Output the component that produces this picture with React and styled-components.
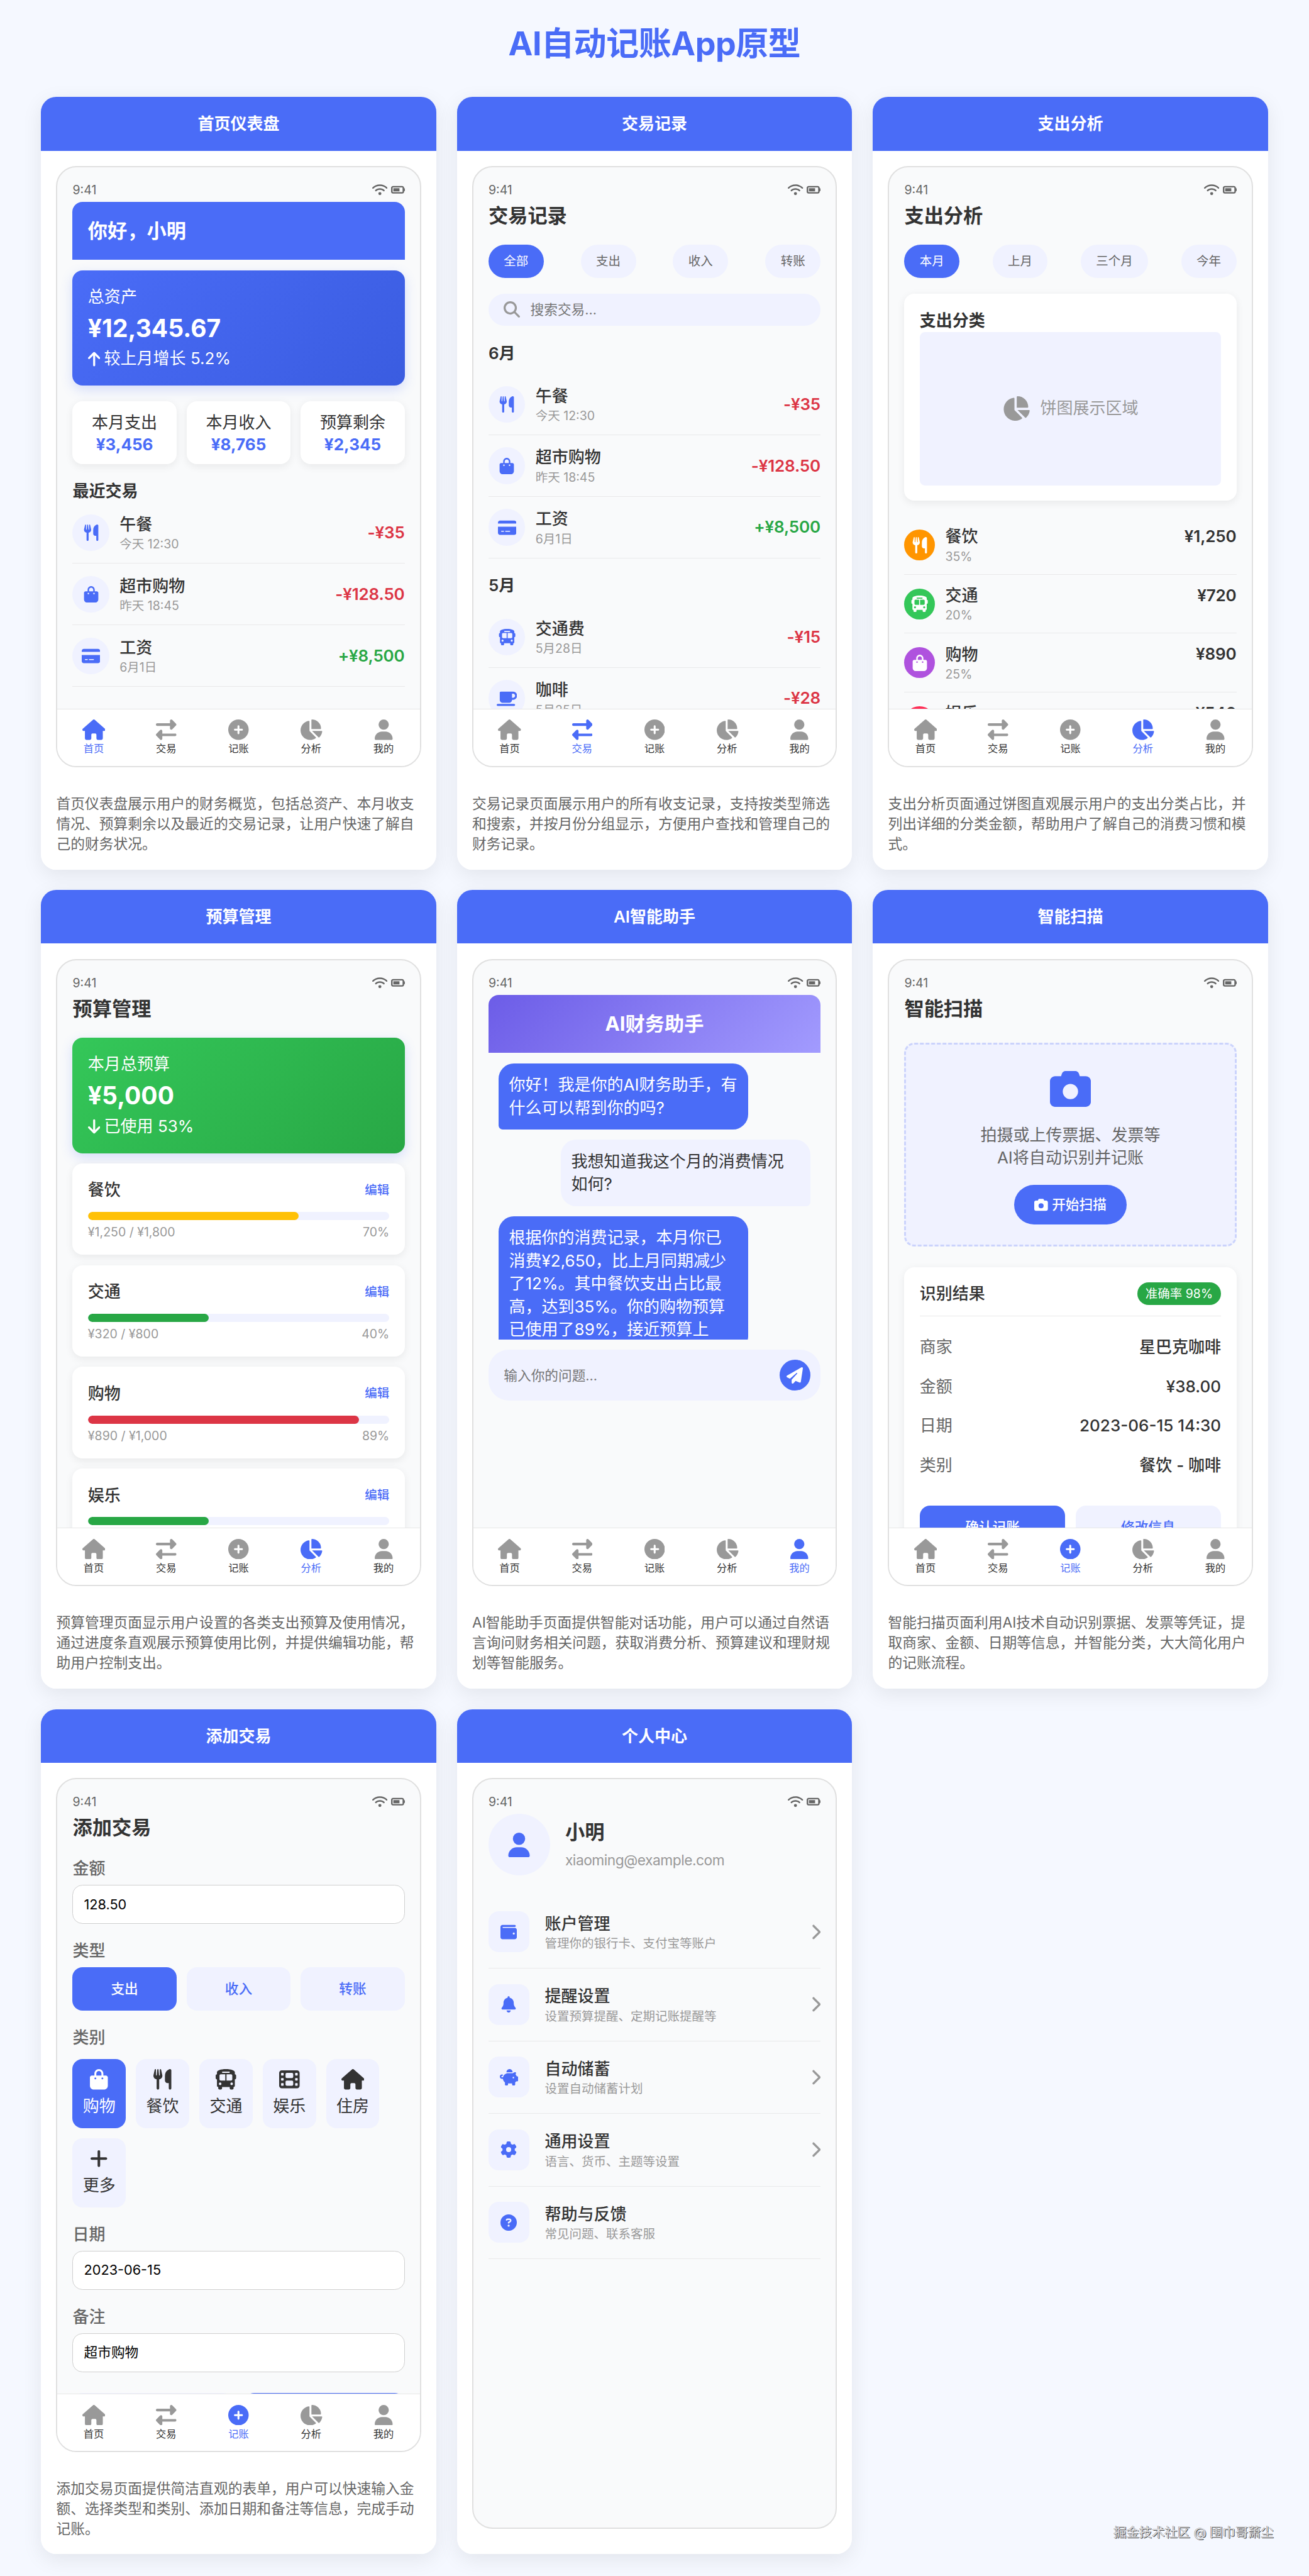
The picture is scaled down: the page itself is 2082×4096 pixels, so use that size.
import React from "react";
import styled, { createGlobalStyle, css } from "styled-components";
import * as Fa from "react-icons/fa6";

const {
  FaUtensils, FaBagShopping, FaRightLeft, FaCirclePlus, FaUser, FaMagnifyingGlass, FaFilm,
  FaPaperPlane, FaCamera, FaPlus, FaWallet, FaBell, FaGear, FaCircleQuestion,
} = Fa;

/* glyphs whose drawing is wider or narrower than one em */
const sized = (Icon, em) => styled(Icon)`
  width: ${em}em;
`;
const FaWifi = sized(Fa.FaWifi, 1.25);
const FaBattery = sized(Fa.FaBatteryThreeQuarters, 1.125);
const FaArrowUp = sized(Fa.FaArrowUp, 0.75);
const FaArrowDown = sized(Fa.FaArrowDown, 0.75);
const FaCreditCard = sized(Fa.FaCreditCard, 1.125);
const FaHouse = sized(Fa.FaHouse, 1.125);
const FaChartPie = sized(Fa.FaChartPie, 1.125);
const FaBus = sized(Fa.FaBus, 1.125);
const FaMugSaucer = sized(Fa.FaMugSaucer, 1.25);
const FaPiggyBank = sized(Fa.FaPiggyBank, 1.125);
const FaChevronRight = sized(Fa.FaChevronRight, 0.625);

/* 1rem is ten design pixels */
const GlobalStyle = createGlobalStyle`
  html { font-size: 16.265625px; }
  *, *::before, *::after { box-sizing: border-box; }
  body {
    margin: 0;
    background: #f5f8ff;
    color: #333;
    font-family: Inter, "Noto Sans CJK SC", sans-serif;
    font-size: 1.6rem;
    line-height: 1.4;
  }
  svg { display: block; flex: none; }
`;

const blue = "#4a6cf7";
const tint = "#f0f2ff";

const Page = styled.main`
  position: relative;
  height: 251.8rem;
  padding: 2.05rem 4rem 0;
`;
const PageTitle = styled.h1`
  margin: 0 0 2.96rem;
  height: 4.48rem;
  line-height: 4.6rem;
  font-size: 3.2rem;
  font-weight: 700;
  letter-spacing: -0.03rem;
  text-align: center;
  color: ${blue};
`;
const Grid = styled.div`
  display: grid;
  grid-template-columns: repeat(3, 1fr);
  gap: 2rem;
`;
const Card = styled.section`
  display: flex;
  flex-direction: column;
  height: ${(p) => p.$h}rem;
  border-radius: 1.5rem;
  overflow: hidden;
  background: #fff;
`;
const CardShadow = styled.div`
  border-radius: 1.5rem;
  box-shadow: 0 0.5rem 2rem rgba(0, 0, 0, 0.08);
`;
const CardHeader = styled.header`
  height: 5.24rem;
  padding: 1.54rem 1.5rem 0;
  background: ${blue};
  color: #fff;
  font-weight: 600;
  text-align: center;
`;
const CardBody = styled.div`
  padding: 1.5rem;
`;
const Caption = styled.p`
  margin: 2.6rem 0 0;
  font-size: 1.4rem;
  color: #666;
  white-space: nowrap;
`;

const Phone = styled.div`
  display: flex;
  flex-direction: column;
  height: ${(p) => p.$h}rem;
  border: 2px solid #e0e0e0;
  border-radius: 2rem;
  overflow: hidden;
  background: #f9fafb;
`;
const Screen = styled.div`
  flex: 1;
  min-height: 0;
  overflow: hidden;
  padding: calc(1.6rem - 2px) calc(1.6rem - 2px) 0;
`;
const StatusBar = styled.div`
  display: flex;
  justify-content: space-between;
  height: 1.91rem;
  font-size: 1.2rem;
  line-height: 1.5rem;
  color: #666;
`;
const StatusIcons = styled.div`
  display: flex;
  align-items: center;
  gap: 0.33rem;
  height: 1.44rem;
`;
const Nav = styled.nav`
  display: flex;
  height: calc(5.7rem - 2px);
  padding-top: 1rem;
  border-top: 1px solid #e6e6e6;
  background: #fff;
`;
const NavItem = styled.div`
  flex: 1;
  display: flex;
  flex-direction: column;
  align-items: center;
  gap: 0.16rem;
  font-size: 1rem;
  color: ${(p) => (p.$active ? blue : "#333")};
  svg { font-size: 2rem; color: ${(p) => (p.$active ? blue : "#999")}; }
`;

const ScreenTitle = styled.h2`
  margin: 0 0 1.5rem;
  height: 2.69rem;
  line-height: 2.75rem;
  font-size: 1.92rem;
  font-weight: 700;
`;
const Banner = styled.div`
  height: 5.68rem;
  padding: 1.5rem;
  border-radius: 1rem 1rem 0 0;
  background: ${(p) => (p.$ai ? "linear-gradient(135deg, #6c5ce7, #a29bfe)" : blue)};
  color: #fff;
  font-size: 1.92rem;
  line-height: 2.75rem;
  font-weight: 700;
  text-align: ${(p) => (p.$ai ? "center" : "left")};
`;
const TotalCard = styled.div`
  height: 11.28rem;
  margin-top: ${(p) => p.$mt || 0}rem;
  padding: 1.5rem;
  border-radius: 1rem;
  color: #fff;
  background: ${(p) =>
    p.$green ? "linear-gradient(135deg, #34c759, #28a745)" : "linear-gradient(135deg, #4a6cf7, #3a5ce0)"};
  box-shadow: 0 0.4rem 1.2rem rgba(74, 108, 247, 0.2);
`;
const Amount = styled.div`
  height: 3.8rem;
  line-height: 3.8rem;
  font-size: 2.4rem;
  font-weight: 700;
`;
const Trend = styled.div`
  display: flex;
  align-items: center;
  gap: 0.38rem;
`;
const Stats = styled.div`
  display: flex;
  gap: 1rem;
  margin-top: 1.5rem;
`;
const panel = css`
  background: #fff;
  border-radius: 1rem;
  box-shadow: 0 0.2rem 0.8rem rgba(0, 0, 0, 0.07);
`;
const Stat = styled.div`
  ${panel}
  flex: 1;
  height: 6.16rem;
  padding-top: 1.04rem;
  text-align: center;
  line-height: 2.24rem;
`;
const StatValue = styled.div`
  margin-top: -0.14rem;
  font-weight: 700;
  color: ${blue};
`;
const SectionTitle = styled.h3`
  margin: ${(p) => p.$m || "0"};
  height: 2.24rem;
  line-height: 2.28rem;
  font-size: 1.6rem;
  font-weight: 600;
`;

const Row = styled.div`
  display: flex;
  align-items: center;
  gap: ${(p) => p.$gap || 1}rem;
  height: ${(p) => p.$h || 6.02}rem;
  border-bottom: 1px solid #e9e9ea;
`;
const RoundIcon = styled.div`
  display: grid;
  place-items: center;
  flex: none;
  width: ${(p) => p.$s || 3.6}rem;
  height: ${(p) => p.$s || 3.6}rem;
  border-radius: ${(p) => p.$r || "50%"};
  background: ${(p) => p.$bg || tint};
  color: ${(p) => (p.$bg ? "#fff" : blue)};
  font-size: ${(p) => p.$fs || 1.6}rem;
`;
const RowText = styled.div`
  flex: 1;
  padding-top: 0.08rem;
`;
const Name = styled.div`
  font-weight: 500;
`;
const Small = styled.div`
  font-size: 1.2rem;
  color: #999;
`;
const Money = styled.div`
  font-weight: 600;
  letter-spacing: -0.01rem;
  color: ${(p) => p.$c || "#333"};
  align-self: ${(p) => (p.$top ? "flex-start" : "center")};
  padding-top: ${(p) => (p.$top ? "0.9rem" : "0")};
`;

const Tabs = styled.div`
  display: flex;
  justify-content: space-between;
  margin-bottom: 1.5rem;
`;
const Tab = styled.div`
  padding: 0.8rem 1.5rem;
  border-radius: 2rem;
  font-size: 1.2rem;
  background: ${(p) => (p.$active ? blue : tint)};
  color: ${(p) => (p.$active ? "#fff" : "#666")};
`;
const Search = styled.div`
  display: flex;
  align-items: center;
  gap: 1rem;
  height: 3.15rem;
  padding: 0 1.5rem;
  border-radius: 2rem;
  background: ${tint};
  font-size: 1.333rem;
  color: #757575;
  svg { font-size: 1.6rem; color: #999; }
`;

const ChartPanel = styled.div`
  ${panel}
  padding: 1.5rem;
  margin-bottom: 1.5rem;
`;
const ChartArea = styled.div`
  display: flex;
  align-items: center;
  justify-content: center;
  gap: 1rem;
  height: 15rem;
  border-radius: 0.5rem;
  background: ${tint};
  color: #999;
  svg { font-size: 2.4rem; }
`;

const Budget = styled.div`
  ${panel}
  height: 8.95rem;
  margin-top: 1rem;
  padding: 1.5rem;
`;
const Between = styled.div`
  display: flex;
  justify-content: space-between;
  align-items: center;
`;
const Edit = styled.span`
  font-size: 1.2rem;
  font-weight: 500;
  color: ${blue};
`;
const Track = styled.div`
  height: 0.8rem;
  margin: 1rem 0 0.4rem;
  border-radius: 0.4rem;
  background: ${tint};
  overflow: hidden;
`;
const Fill = styled.div`
  height: 100%;
  border-radius: 0.4rem;
  background: ${(p) => p.$c};
`;

const Chat = styled.div`
  display: flex;
  flex-direction: column;
  gap: 1rem;
  height: 28rem;
  padding: 1rem;
  overflow: hidden;
`;
const Bubble = styled.div`
  flex: none;
  width: 80%;
  padding: 1.02rem 1rem 0.98rem;
  white-space: nowrap;
  align-self: ${(p) => (p.$me ? "flex-end" : "flex-start")};
  border-radius: ${(p) => (p.$me ? "1.5rem 1.5rem 0.4rem 1.5rem" : "1.5rem 1.5rem 1.5rem 0.4rem")};
  background: ${(p) => (p.$me ? tint : blue)};
  color: ${(p) => (p.$me ? "#333" : "#fff")};
`;
const Composer = styled.div`
  display: flex;
  align-items: center;
  justify-content: space-between;
  height: 5rem;
  margin-top: 1rem;
  padding: 0 1rem 0 1.5rem;
  border-radius: 2rem;
  background: ${tint};
  font-size: 1.333rem;
  color: #757575;
`;

const ScanBox = styled.div`
  display: flex;
  flex-direction: column;
  align-items: center;
  height: 19.95rem;
  margin-top: 1.96rem;
  padding-top: 2.35rem;
  border: 3px dashed #cbd3fc;
  border-radius: 1rem;
  background: ${tint};
  color: #666;
  text-align: center;
  > svg { font-size: 4rem; color: ${blue}; margin-bottom: 1.42rem; }
`;
const ScanButton = styled.div`
  display: flex;
  align-items: center;
  justify-content: center;
  gap: 0.4rem;
  width: 11.06rem;
  height: 3.87rem;
  margin-top: 1.48rem;
  border-radius: 2rem;
  background: ${blue};
  color: #fff;
  font-size: 1.333rem;
  font-weight: 500;
`;
const Result = styled.div`
  ${panel}
  margin-top: 2rem;
  padding: 1.5rem;
`;
const ResultHead = styled(Between)`
  padding-bottom: 1.04rem;
  margin-bottom: 1.08rem;
  border-bottom: 1px solid #e9e9e9;
`;
const Badge = styled.span`
  width: 8.2rem;
  height: 2.24rem;
  line-height: 2.24rem;
  border-radius: 1.12rem;
  background: #28a745;
  color: #fff;
  font-size: 1.2rem;
  text-align: center;
`;
const Field = styled(Between)`
  height: 3.85rem;
  color: #666;
`;
const FieldValue = styled.span`
  font-weight: 500;
  color: #333;
`;
const Buttons = styled.div`
  display: flex;
  gap: 1rem;
  margin-top: ${(p) => p.$mt || 0}rem;
`;
const Button = styled.div`
  flex: 1;
  height: 4.24rem;
  line-height: 4.24rem;
  border-radius: 1rem;
  text-align: center;
  font-size: 1.333rem;
  font-weight: 500;
  background: ${(p) => (p.$primary ? blue : tint)};
  color: ${(p) => (p.$primary ? "#fff" : blue)};
`;

const Label = styled.div`
  height: 2.24rem;
  line-height: 2.3rem;
  margin: 1.5rem 0 ${(p) => p.$mb || 0.5}rem;
  font-weight: 500;
  color: #666;
`;
const Input = styled.div`
  display: flex;
  align-items: center;
  height: 3.82rem;
  padding: 0 1.05rem;
  border: 1px solid #cfcfcf;
  border-radius: 1rem;
  background: #fff;
  color: #000;
  font-size: 1.333rem;
`;
const Categories = styled.div`
  display: flex;
  flex-wrap: wrap;
  gap: 1rem;
`;
const Category = styled.div`
  display: flex;
  flex-direction: column;
  align-items: center;
  gap: 0.5rem;
  width: 5.2rem;
  padding: 1rem 0;
  border-radius: 1rem;
  background: ${(p) => (p.$active ? blue : tint)};
  color: ${(p) => (p.$active ? "#fff" : "#333")};
  svg { font-size: 2rem; }
`;

const Profile = styled.div`
  display: flex;
  align-items: center;
  gap: 1.5rem;
  height: 6rem;
  margin-bottom: 2rem;
`;
const ProfileName = styled.div`
  font-size: 1.92rem;
  font-weight: 700;
`;
const Email = styled.div`
  margin-top: 0.4rem;
  font-size: 1.4rem;
  letter-spacing: -0.03rem;
  color: #999;
`;
const Chevron = styled(FaChevronRight)`
  color: #999;
  font-size: 1.6rem;
`;
const Watermark = styled.div`
  position: absolute;
  right: 3.45rem;
  top: 246.65rem;
  line-height: 1.8rem;
  font-size: 1.25rem;
  color: #e4e4e6;
  text-shadow: 1px 1px 0 #444, -0.5px -0.5px 0 #777;
`;

const NAV = [
  ["首页", FaHouse],
  ["交易", FaRightLeft],
  ["记账", FaCirclePlus],
  ["分析", FaChartPie],
  ["我的", FaUser],
];

function Mockup({ title, cardHeight, phoneHeight, active, caption, children }) {
  return (
    <CardShadow>
      <Card $h={cardHeight}>
        <CardHeader>{title}</CardHeader>
        <CardBody>
          <Phone $h={phoneHeight}>
            <Screen>
              <StatusBar>
                <span>9:41</span>
                <StatusIcons>
                  <FaWifi />
                  <FaBattery />
                </StatusIcons>
              </StatusBar>
              {children}
            </Screen>
            {active !== undefined && (
              <Nav>
                {NAV.map(([label, Icon], i) => (
                  <NavItem key={label} $active={i === active}>
                    <Icon />
                    {label}
                  </NavItem>
                ))}
              </Nav>
            )}
          </Phone>
          {caption && (
            <Caption>
              {caption.map((line) => (
                <React.Fragment key={line}>
                  {line}
                  <br />
                </React.Fragment>
              ))}
            </Caption>
          )}
        </CardBody>
      </Card>
    </CardShadow>
  );
}

function Transaction({ icon: Icon, name, time, amount }) {
  return (
    <Row>
      <RoundIcon><Icon /></RoundIcon>
      <RowText>
        <Name>{name}</Name>
        <Small>{time}</Small>
      </RowText>
      <Money $c={amount[0] === "+" ? "#28a745" : "#dc3545"}>{amount}</Money>
    </Row>
  );
}

const JUNE = [
  { icon: FaUtensils, name: "午餐", time: "今天 12:30", amount: "-¥35" },
  { icon: FaBagShopping, name: "超市购物", time: "昨天 18:45", amount: "-¥128.50" },
  { icon: FaCreditCard, name: "工资", time: "6月1日", amount: "+¥8,500" },
];
const MAY = [
  { icon: FaBus, name: "交通费", time: "5月28日", amount: "-¥15" },
  { icon: FaMugSaucer, name: "咖啡", time: "5月25日", amount: "-¥28" },
];
const SPENDING = [
  [FaUtensils, "#ff9500", "餐饮", "35%", "¥1,250"],
  [FaBus, "#34c759", "交通", "20%", "¥720"],
  [FaBagShopping, "#af52de", "购物", "25%", "¥890"],
  [FaFilm, "#ff2d55", "娱乐", "15%", "¥540"],
];
const BUDGETS = [
  ["餐饮", "¥1,250 / ¥1,800", "70%", 70, "#ffc107"],
  ["交通", "¥320 / ¥800", "40%", 40, "#28a745"],
  ["购物", "¥890 / ¥1,000", "89%", 90, "#dc3545"],
  ["娱乐", null, null, 40, "#28a745"],
];
const CATEGORIES = [
  [FaBagShopping, "购物"],
  [FaUtensils, "餐饮"],
  [FaBus, "交通"],
  [FaFilm, "娱乐"],
  [FaHouse, "住房"],
  [FaPlus, "更多"],
];
const MENU = [
  [FaWallet, "账户管理", "管理你的银行卡、支付宝等账户", true],
  [FaBell, "提醒设置", "设置预算提醒、定期记账提醒等", true],
  [FaPiggyBank, "自动储蓄", "设置自动储蓄计划", true],
  [FaGear, "通用设置", "语言、货币、主题等设置", true],
  [FaCircleQuestion, "帮助与反馈", "常见问题、联系客服", false],
];

export default function App() {
  return (
    <Page>
      <GlobalStyle />
      <PageTitle>AI自动记账App原型</PageTitle>
      <Grid>
        <Mockup
          title="首页仪表盘" cardHeight={75.52} phoneHeight={58.76} active={0}
          caption={["首页仪表盘展示用户的财务概览，包括总资产、本月收支", "情况、预算剩余以及最近的交易记录，让用户快速了解自", "己的财务状况。"]}
        >
          <Banner>你好，小明</Banner>
          <TotalCard $mt={1}>
            <div>总资产</div>
            <Amount>¥12,345.67</Amount>
            <Trend><FaArrowUp />较上月增长 5.2%</Trend>
          </TotalCard>
          <Stats>
            <Stat>本月支出<StatValue>¥3,456</StatValue></Stat>
            <Stat>本月收入<StatValue>¥8,765</StatValue></Stat>
            <Stat>预算剩余<StatValue>¥2,345</StatValue></Stat>
          </Stats>
          <SectionTitle $m="1.5rem 0 0">最近交易</SectionTitle>
          {JUNE.map((t) => <Transaction key={t.name} {...t} />)}
        </Mockup>

        <Mockup
          title="交易记录" cardHeight={75.52} phoneHeight={58.76} active={1}
          caption={["交易记录页面展示用户的所有收支记录，支持按类型筛选", "和搜索，并按月份分组显示，方便用户查找和管理自己的", "财务记录。"]}
        >
          <ScreenTitle>交易记录</ScreenTitle>
          <Tabs>
            <Tab $active>全部</Tab><Tab>支出</Tab><Tab>收入</Tab><Tab>转账</Tab>
          </Tabs>
          <Search><FaMagnifyingGlass />搜索交易...</Search>
          <SectionTitle $m="1.5rem 0 0.95rem">6月</SectionTitle>
          {JUNE.map((t) => <Transaction key={t.name} {...t} />)}
          <SectionTitle $m="1.5rem 0 0.95rem">5月</SectionTitle>
          {MAY.map((t) => <Transaction key={t.name} {...t} />)}
        </Mockup>

        <Mockup
          title="支出分析" cardHeight={75.52} phoneHeight={58.76} active={3}
          caption={["支出分析页面通过饼图直观展示用户的支出分类占比，并", "列出详细的分类金额，帮助用户了解自己的消费习惯和模", "式。"]}
        >
          <ScreenTitle>支出分析</ScreenTitle>
          <Tabs>
            <Tab $active>本月</Tab><Tab>上月</Tab><Tab>三个月</Tab><Tab>今年</Tab>
          </Tabs>
          <ChartPanel>
            <SectionTitle>支出分类</SectionTitle>
            <ChartArea><FaChartPie />饼图展示区域</ChartArea>
          </ChartPanel>
          {SPENDING.map(([Icon, color, name, share, amount]) => (
            <Row key={name} $h={5.75}>
              <RoundIcon $s={3} $bg={color}><Icon /></RoundIcon>
              <RowText>
                <Name>{name}</Name>
                <Small>{share}</Small>
              </RowText>
              <Money $top>{amount}</Money>
            </Row>
          ))}
        </Mockup>

        <Mockup
          title="预算管理" cardHeight={78.08} phoneHeight={61.3} active={3}
          caption={["预算管理页面显示用户设置的各类支出预算及使用情况，", "通过进度条直观展示预算使用比例，并提供编辑功能，帮", "助用户控制支出。"]}
        >
          <ScreenTitle>预算管理</ScreenTitle>
          <TotalCard $green>
            <div>本月总预算</div>
            <Amount>¥5,000</Amount>
            <Trend><FaArrowDown />已使用 53%</Trend>
          </TotalCard>
          {BUDGETS.map(([name, used, share, width, color]) => (
            <Budget key={name}>
              <Between><Name>{name}</Name><Edit>编辑</Edit></Between>
              <Track><Fill $c={color} style={{ width: `${width}%` }} /></Track>
              {used && <Between><Small>{used}</Small><Small>{share}</Small></Between>}
            </Budget>
          ))}
        </Mockup>

        <Mockup
          title="AI智能助手" cardHeight={78.08} phoneHeight={61.3} active={4}
          caption={["AI智能助手页面提供智能对话功能，用户可以通过自然语", "言询问财务相关问题，获取消费分析、预算建议和理财规", "划等智能服务。"]}
        >
          <Banner $ai>AI财务助手</Banner>
          <Chat>
            <Bubble>你好！我是你的AI财务助手，有<br />什么可以帮到你的吗?</Bubble>
            <Bubble $me>我想知道我这个月的消费情况<br />如何?</Bubble>
            <Bubble>
              根据你的消费记录，本月你已<br />消费¥2,650，比上月同期减少<br />了12%。其中餐饮支出占比最<br />
              高，达到35%。你的购物预算<br />已使用了89%，接近预算上
            </Bubble>
          </Chat>
          <Composer>
            输入你的问题...
            <RoundIcon $s={3} $bg={blue}><FaPaperPlane /></RoundIcon>
          </Composer>
        </Mockup>

        <Mockup
          title="智能扫描" cardHeight={78.08} phoneHeight={61.3} active={2}
          caption={["智能扫描页面利用AI技术自动识别票据、发票等凭证，提", "取商家、金额、日期等信息，并智能分类，大大简化用户", "的记账流程。"]}
        >
          <ScreenTitle>智能扫描</ScreenTitle>
          <ScanBox>
            <FaCamera />
            <div>拍摄或上传票据、发票等<br />AI将自动识别并记账</div>
            <ScanButton><FaCamera />开始扫描</ScanButton>
          </ScanBox>
          <Result>
            <ResultHead><Name>识别结果</Name><Badge>准确率 98%</Badge></ResultHead>
            <Field>商家<FieldValue>星巴克咖啡</FieldValue></Field>
            <Field>金额<FieldValue>¥38.00</FieldValue></Field>
            <Field>日期<FieldValue>2023-06-15 14:30</FieldValue></Field>
            <Field>类别<FieldValue>餐饮 - 咖啡</FieldValue></Field>
            <Buttons $mt={2}>
              <Button $primary>确认记账</Button>
              <Button>修改信息</Button>
            </Buttons>
          </Result>
        </Mockup>

        <Mockup
          title="添加交易" cardHeight={82.6} phoneHeight={65.9} active={2}
          caption={["添加交易页面提供简洁直观的表单，用户可以快速输入金", "额、选择类型和类别、添加日期和备注等信息，完成手动", "记账。"]}
        >
          <ScreenTitle>添加交易</ScreenTitle>
          <Label>金额</Label>
          <Input>128.50</Input>
          <Label>类型</Label>
          <Buttons>
            <Button $primary>支出</Button><Button>收入</Button><Button>转账</Button>
          </Buttons>
          <Label $mb={1}>类别</Label>
          <Categories>
            {CATEGORIES.map(([Icon, name], i) => (
              <Category key={name} $active={i === 0}><Icon />{name}</Category>
            ))}
          </Categories>
          <Label>日期</Label>
          <Input>2023-06-15</Input>
          <Label>备注</Label>
          <Input>超市购物</Input>
          <Buttons $mt={2.04}>
            <Button />
            <Button $primary />
          </Buttons>
        </Mockup>

        <Mockup title="个人中心" cardHeight={82.6} phoneHeight={73.39}>
          <Profile>
            <RoundIcon $s={6} $fs={2.4}><FaUser /></RoundIcon>
            <div>
              <ProfileName>小明</ProfileName>
              <Email>xiaoming@example.com</Email>
            </div>
          </Profile>
          {MENU.map(([Icon, name, hint, arrow]) => (
            <Row key={name} $h={7.1} $gap={1.5}>
              <RoundIcon $s={4} $r="1rem"><Icon /></RoundIcon>
              <RowText>
                <Name>{name}</Name>
                <Small>{hint}</Small>
              </RowText>
              {arrow && <Chevron />}
            </Row>
          ))}
        </Mockup>
      </Grid>
      <Watermark>掘金技术社区 @ 围巾哥萧尘</Watermark>
    </Page>
  );
}
